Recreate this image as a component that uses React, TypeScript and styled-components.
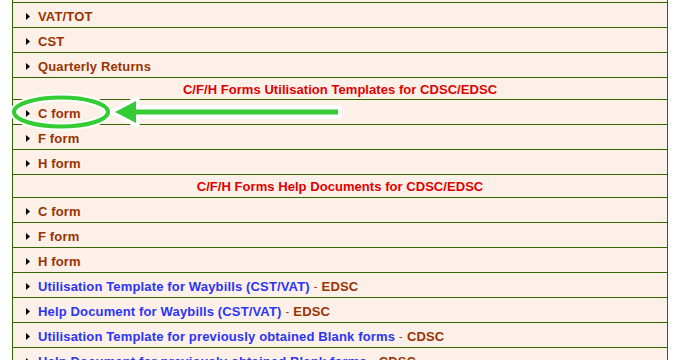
import React from 'react';
import styled, { createGlobalStyle } from 'styled-components';

const GlobalStyle = createGlobalStyle`
    html, body {
        margin: 0;
        padding: 0;
        background: #ffffff;
        overflow: hidden;
    }
`;

const Page = styled.div`
    position: relative;
    width: 684px;
    height: 360px;
    overflow: hidden;
    font-family: 'Liberation Sans', Arial, sans-serif;
    font-size: 13px;
    font-weight: bold;
`;

const Table = styled.div`
    margin-left: 12px;
    width: 654px;
    background: #fdf0e8;
    border-left: 1px solid #336600;
    border-right: 1px solid #336600;
`;

const Stub = styled.div`
    height: 2px;
    border-bottom: 1px solid #336600;
`;

const Row = styled.div`
    display: flex;
    align-items: center;
    box-sizing: border-box;
    height: 25px;
    padding: 2px 0 0 13px;
    border-bottom: 1px solid #336600;
    letter-spacing: 0.15px;
`;

const Header = styled.div<{ $tall?: boolean }>`
    display: flex;
    align-items: center;
    justify-content: center;
    box-sizing: border-box;
    height: ${(p) => (p.$tall ? 23 : 22)}px;
    padding-top: 1px;
    border-bottom: 1px solid #336600;
    color: #e00000;
    letter-spacing: 0.05px;
`;

const Bullet = styled.svg`
    flex: none;
    margin-right: 8px;
`;

const Label = styled.span<{ $link?: boolean }>`
    color: ${(p) => (p.$link ? '#2b35f5' : '#993300')};
    white-space: nowrap;
`;

const Dash = styled.span`
    color: #993300;
    font-weight: normal;
    font-size: 11px;
    margin: 0 4px;
`;

const Suffix = styled.span`
    color: #993300;
`;

const Overlay = styled.svg`
    position: absolute;
    left: 0;
    top: 0;
    pointer-events: none;
`;

type Item = { text: string; suffix?: string };

const topItems: Item[] = [{ text: 'VAT/TOT' }, { text: 'CST' }, { text: 'Quarterly Returns' }];
const forms: Item[] = [{ text: 'C form' }, { text: 'F form' }, { text: 'H form' }];
const links: Item[] = [
    { text: 'Utilisation Template for Waybills (CST/VAT)', suffix: 'EDSC' },
    { text: 'Help Document for Waybills (CST/VAT)', suffix: 'EDSC' },
    { text: 'Utilisation Template for previously obtained Blank forms', suffix: 'CDSC' },
    { text: 'Help Document for previously obtained Blank forms', suffix: 'CDSC' },
];

const ListRow: React.FC<{ item: Item }> = ({ item }) => (
    <Row>
        <Bullet width="4" height="7" viewBox="0 0 4 7">
            <polygon points="0,0 4,3.5 0,7" fill="#000" />
        </Bullet>
        <Label $link={!!item.suffix}>{item.text}</Label>
        {item.suffix && (
            <>
                <Dash>-</Dash>
                <Suffix>{item.suffix}</Suffix>
            </>
        )}
    </Row>
);

export default function App() {
    return (
        <Page>
            <GlobalStyle />
            <Table>
                <Stub />
                {topItems.map((it) => (
                    <ListRow key={it.text} item={it} />
                ))}
                <Header>C/F/H Forms Utilisation Templates for CDSC/EDSC</Header>
                {forms.map((it) => (
                    <ListRow key={'u' + it.text} item={it} />
                ))}
                <Header $tall>C/F/H Forms Help Documents for CDSC/EDSC</Header>
                {forms.map((it) => (
                    <ListRow key={'h' + it.text} item={it} />
                ))}
                {links.map((it) => (
                    <ListRow key={it.text} item={it} />
                ))}
            </Table>
            <Overlay width="684" height="360" viewBox="0 0 684 360">
                <g fill="none" stroke="#ffffff" strokeWidth="8" strokeLinejoin="round">
                    <ellipse cx="61" cy="112" rx="47" ry="14.5" />
                    <polygon points="115,112 136,101 136,123" fill="#ffffff" />
                    <rect x="134" y="109.5" width="204" height="5" fill="#ffffff" />
                </g>
                <g>
                    <ellipse cx="61" cy="112" rx="47" ry="14.5" fill="none" stroke="#33cc33" strokeWidth="4" />
                    <polygon points="115,112 136,101 136,123" fill="#33cc33" />
                    <rect x="134" y="109.5" width="204" height="5" fill="#33cc33" />
                </g>
            </Overlay>
        </Page>
    );
}
